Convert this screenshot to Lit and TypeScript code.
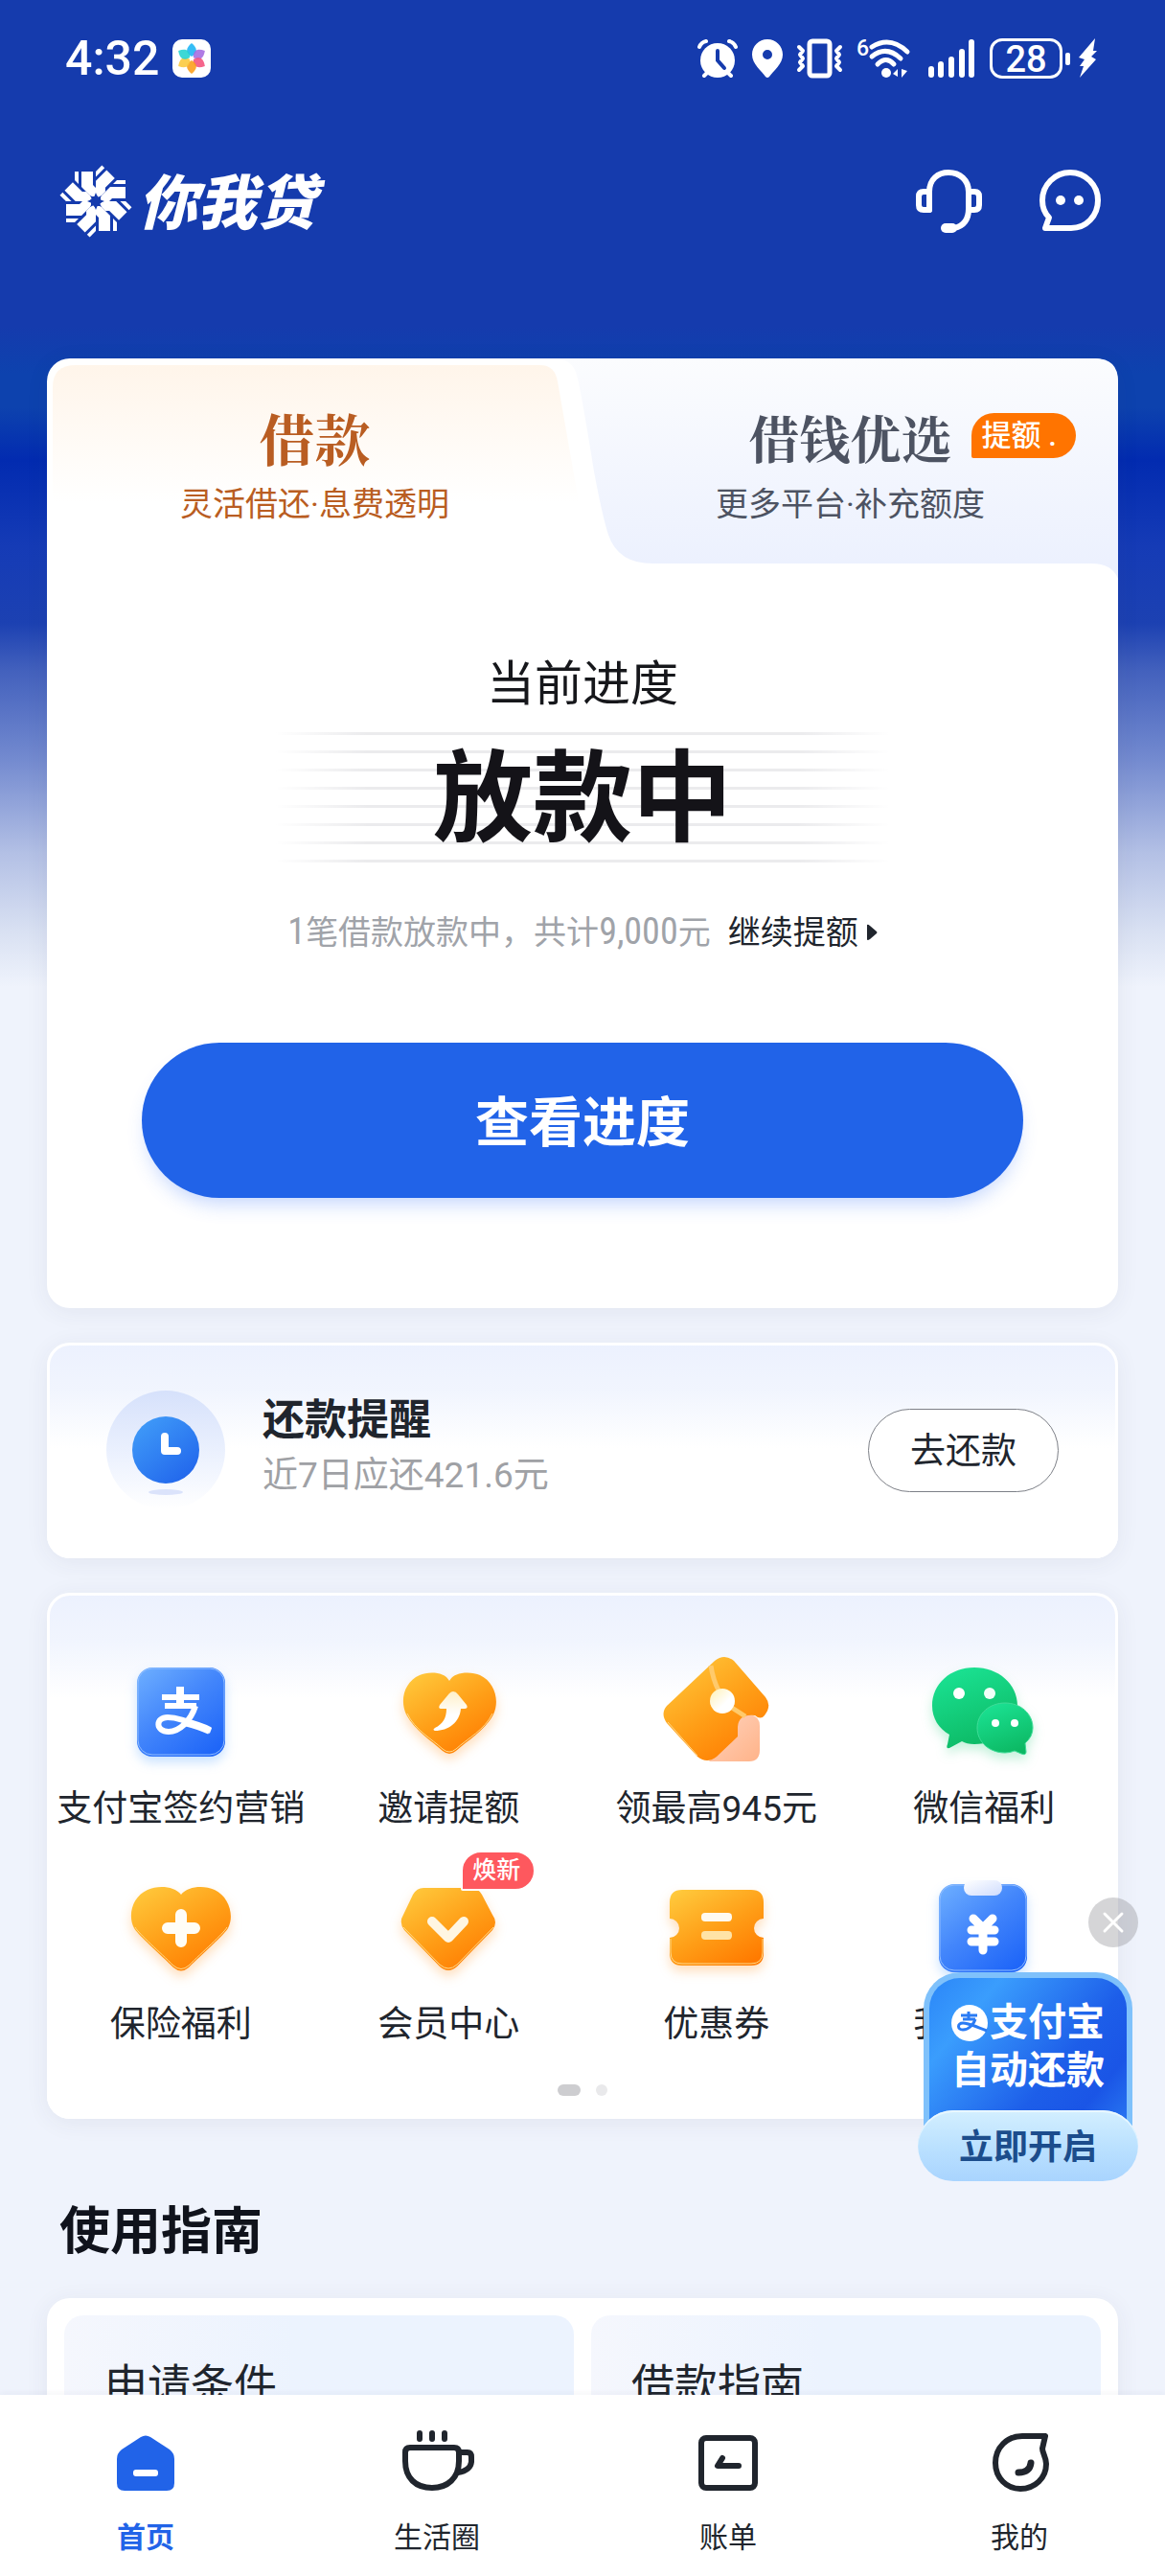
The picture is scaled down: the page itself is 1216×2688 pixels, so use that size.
import { LitElement, html, svg, css, nothing } from "lit";
import { customElement, state } from "lit/decorators.js";
import { classMap } from "lit/directives/class-map.js";

type Shape = ReturnType<typeof svg>;

interface Service {
  label: string;
  icon: Shape;
  badge?: string;
}

interface NavItem {
  label: string;
  icon: Shape;
}

const gradients = svg`
  <defs>
    <linearGradient id="orange" x1="0.1" y1="0" x2="0.8" y2="1">
      <stop offset="0" stop-color="#ffc93c" />
      <stop offset="0.55" stop-color="#ff9d16" />
      <stop offset="1" stop-color="#ff7a00" />
    </linearGradient>
    <linearGradient id="blue" x1="0" y1="0" x2="0.8" y2="1">
      <stop offset="0" stop-color="#6fb0ff" />
      <stop offset="0.5" stop-color="#4386fb" />
      <stop offset="1" stop-color="#1f66f8" />
    </linearGradient>
    <linearGradient id="green" x1="0.2" y1="0" x2="0.6" y2="1">
      <stop offset="0" stop-color="#1be394" />
      <stop offset="1" stop-color="#0cb863" />
    </linearGradient>
    <linearGradient id="cream" x1="0.5" y1="0" x2="0.5" y2="1">
      <stop offset="0" stop-color="#fff0c8" />
      <stop offset="0.6" stop-color="#ffffff" />
    </linearGradient>
    <linearGradient id="pearl" x1="0" y1="0" x2="1" y2="1">
      <stop offset="0" stop-color="#fff0b4" />
      <stop offset="0.6" stop-color="#ffffff" />
    </linearGradient>
    <linearGradient id="peach" x1="0" y1="0" x2="1" y2="1">
      <stop offset="0" stop-color="#ffd3bd" />
      <stop offset="1" stop-color="#ffb389" />
    </linearGradient>
    <linearGradient id="clip" x1="0" y1="0" x2="1" y2="1">
      <stop offset="0" stop-color="#ffffff" />
      <stop offset="1" stop-color="#cfdcfd" />
    </linearGradient>
  </defs>
`;

const services: Service[] = [
  {
    label: "支付宝签约营销",
    icon: svg`<g class="glow-blue">
        <rect x="14" y="14" width="92" height="93" rx="16" fill="url(#blue)" />
        <rect x="15" y="15" width="90" height="90" rx="15" fill="none" stroke="#8fbcff" stroke-width="1" />
      </g>
      <g fill="none" stroke="#fff" stroke-width="6">
        <path d="M59 34V53" stroke-width="8" />
        <path d="M40 45H79M43 54H76" />
        <path d="M75 54C70 70 58 81 47 81C33 81 33 66 46 66C58 66 70 72 91 80" />
        <path d="M64 71C72 73 82 76 90 80" stroke-width="8" />
      </g>`,
  },
  {
    label: "邀请提额",
    icon: svg`<g class="glow-orange">
        <path d="M61 28C66 18 84 18 93 22C108 29 114 48 107 63C98 80 80 90 68 101Q61 107 54 101C42 90 25 80 16 63C9 48 14 29 30 22C39 18 56 18 61 28Z" fill="url(#orange)" />
        <path d="M106 62C98 79 80 88 68 99Q61 105 54 99C42 88 25 79 17 62" fill="none" stroke="#ffd98a" stroke-width="1" />
      </g>
      <path d="M65 39Q68 39 70 42L79 53Q81 57 77 57H73C72 71 60 80 46 80Q43 79 46 77C54 73 58 67 58 57H52Q49 57 51 53L61 41Q63 39 65 39Z" fill="url(#cream)" />`,
  },
  {
    label: "领最高945元",
    icon: svg`<path d="M82 76V73Q83 63 95 63Q105 65 105 75V100Q105 112 94 112H52Z" fill="url(#peach)" />
      <path d="M58 7Q68 -1 78 7L111 45Q118 54 110 64Q106 69 100 64Q83 62 82 76V86L60 107Q50 115 40 107L8 72Q1 62 8 54Z" fill="url(#orange)" />
      <path d="M40 106L9 71" stroke="#ffd98a" stroke-width="1" />
      <path d="M54 12Q56 26 62 38M76 56L90 65" fill="none" stroke="#ffca6b" stroke-width="5" />
      <circle cx="66" cy="49" r="13" fill="url(#pearl)" />`,
  },
  {
    label: "微信福利",
    icon: svg`<g class="glow-green">
        <path d="M50 14C75 14 95 31 95 54C95 78 75 94 50 94Q42 94 37 91L24 98Q20 99 22 94L24 84C13 78 6 67 6 54C6 31 25 14 50 14Z" fill="url(#green)" />
        <path d="M82 51C98 51 111 62 111 77Q111 86 103 93L104 102Q104 106 99 104L92 101Q87 103 82 103C66 103 53 92 53 77C53 62 66 51 82 51Z" fill="url(#green)" stroke="#3fdc98" stroke-width="1" />
      </g>
      <circle cx="34" cy="41" r="6" fill="#fff" /><circle cx="66" cy="41" r="6" fill="#f1fff8" />
      <circle cx="72" cy="72" r="4" fill="#fff" /><circle cx="92" cy="72" r="4" fill="#fff" />`,
  },
  {
    label: "保险福利",
    icon: svg`<g class="glow-orange">
        <path d="M60 26C67 17 84 16 95 21C110 28 116 48 109 61C105 68 82 88 68 102Q60 109 52 102C38 88 15 68 11 61C4 48 9 28 25 21C36 16 53 17 60 26Z" fill="url(#orange)" />
        <path d="M108 60C104 67 82 86 68 100Q60 107 52 100C38 86 16 67 12 60" fill="none" stroke="#ffd98a" stroke-width="1" />
      </g>
      <path d="M60 47V75M46 61H74" stroke="#fffdf6" stroke-width="12" stroke-linecap="round" />`,
  },
  {
    label: "会员中心",
    badge: "焕新",
    icon: svg`<g class="glow-orange">
        <path d="M34 19H84Q91 19 95 26L106 47Q112 55 106 63L69 101Q60 109 51 101L14 63Q8 55 13 47L23 26Q27 19 34 19Z" fill="url(#orange)" />
        <path d="M107 60L69 99Q60 107 51 99L13 60" fill="none" stroke="#ffd98a" stroke-width="1" />
      </g>
      <path d="M43 54L60 71L76 54" fill="none" stroke="#fff6e2" stroke-width="10" stroke-linecap="round" stroke-linejoin="round" />`,
  },
  {
    label: "优惠券",
    icon: svg`<g class="glow-orange">
        <path d="M24 21H96Q109 21 109 34V51A10 10 0 0 0 109 71V87Q109 100 96 100H24Q11 100 11 87V71A10 10 0 0 0 11 51V34Q11 21 24 21Z" fill="url(#orange)" />
        <path d="M108 72V86Q108 98 96 98H24Q12 98 12 86V72" fill="none" stroke="#ffd98a" stroke-width="1" />
      </g>
      <rect x="44" y="45" width="32" height="9" rx="4" fill="#fffaf0" />
      <rect x="44" y="64" width="32" height="9" rx="4" fill="#ffe3a6" />`,
  },
  {
    label: "我的借款",
    icon: svg`<g class="glow-blue">
        <rect x="13" y="15" width="92" height="92" rx="16" fill="url(#blue)" />
        <rect x="14" y="16" width="90" height="89" rx="15" fill="none" stroke="#8fbcff" stroke-width="1" />
      </g>
      <rect x="39" y="11" width="40" height="16" rx="8" fill="url(#clip)" />
      <path d="M49 51L59 61L69 51M47 63H71M47 75H71M59 62V84" fill="none" stroke="#fff" stroke-width="9" stroke-linecap="round" stroke-linejoin="round" />`,
  },
];

const navItems: NavItem[] = [
  {
    label: "首页",
    icon: svg`<path d="M35 13Q40 10 45 13L65 26Q70 30 70 36V61Q70 69 62 69H18Q10 69 10 61V36Q10 30 15 26Z" fill="#2163e8" />
      <rect x="27" y="47" width="26" height="7" rx="3" fill="#fff" />`,
  },
  {
    label: "生活圈",
    icon: svg`<g fill="none" stroke="#20252d" stroke-width="6" stroke-linecap="round" stroke-linejoin="round">
        <path d="M12 24H58Q63 24 63 29V38C63 56 51 66 35 66C18 66 7 56 7 38V29Q7 24 12 24Z" />
        <path d="M63 29H72Q76 29 76 34V39Q75 48 62 50" />
        <path d="M22 9V15M35 9V15M48 9V15" />
      </g>`,
  },
  {
    label: "账单",
    icon: svg`<g fill="none" stroke="#20252d" stroke-width="6" stroke-linecap="round" stroke-linejoin="round">
        <rect x="12" y="14" width="56" height="52" rx="5" />
        <path d="M34 35L29 43H51" />
      </g>`,
  },
  {
    label: "我的",
    icon: svg`<g fill="none" stroke="#20252d" stroke-width="6" stroke-linecap="round" stroke-linejoin="round">
        <path d="M67 12H43C27 12 15 24 15 40C15 56 27 67 41 67C56 67 68 56 68 41C68 34 64 30 64 25Z" />
        <path d="M52 40Q51 50 39 50" stroke-width="7" />
      </g>`,
  },
];

const emblemArms = [0, 45, 90, 135, 180, 225, 270, 315];
const petals = [
  { angle: 0, color: "#19b4f5" },
  { angle: 60, color: "#a46ae0" },
  { angle: 120, color: "#f4517c" },
  { angle: 180, color: "#fb9d18" },
  { angle: 240, color: "#fbc83b" },
  { angle: 300, color: "#22d3d0" },
];

@customElement("app-root")
export class AppRoot extends LitElement {
  @state() private tab = 0;
  @state() private page = 0;
  @state() private promoOpen = true;

  static styles = css`
    :host {
      display: block;
      font-family: Roboto, "Noto Sans CJK SC", "Liberation Sans", sans-serif;
      color: #20252d;
    }
    * {
      box-sizing: border-box;
    }
    button {
      margin: 0;
      padding: 0;
      border: 0;
      background: none;
      font: inherit;
      color: inherit;
      cursor: pointer;
    }
    a {
      color: inherit;
      text-decoration: none;
    }
    h1,
    h2,
    p {
      margin: 0;
    }
    svg {
      display: block;
      overflow: visible;
    }
    .app {
      position: relative;
      display: flex;
      flex-direction: column;
      height: 100vh;
      background: #eff3fc;
    }
    .scroll {
      flex: 1;
      min-height: 0;
      overflow-y: auto;
      scrollbar-width: none;
      background: linear-gradient(
          180deg,
          #153bad 0,
          #153bad 340px,
          #0d42ae 390px,
          #0d42ae 425px,
          #022bb0 480px,
          #153bb6 570px,
          #1c41b2 650px,
          #4361bd 700px,
          #7289cf 790px,
          #b3c0e5 890px,
          #d8e0f2 970px,
          #eff3fc 1030px
        )
        no-repeat;
    }

    .status {
      display: flex;
      align-items: center;
      justify-content: space-between;
      height: 122px;
      padding: 0 71px 0 68px;
      color: #fff;
    }
    .clock {
      display: flex;
      align-items: center;
      gap: 14px;
      font-size: 50px;
      line-height: 60px;
      font-weight: 500;
    }
    .indicators {
      display: flex;
      align-items: center;
      gap: 15px;
    }
    .wifi {
      margin-right: 3px;
    }
    .power {
      display: flex;
      align-items: center;
      gap: 3px;
    }
    .battery {
      width: 76px;
      height: 42px;
      border: 3px solid #fff;
      border-radius: 13px;
      font-size: 38px;
      font-weight: 500;
      line-height: 38px;
      text-align: center;
    }
    .nub {
      width: 5px;
      height: 13px;
      margin-right: 6px;
      border-radius: 2px;
      background: #fff;
    }

    .brand-bar {
      display: flex;
      align-items: center;
      justify-content: space-between;
      padding: 50px 67px 126px 62px;
      color: #fff;
    }
    .brand {
      display: flex;
      align-items: center;
      gap: 6px;
    }
    .brand-name {
      padding-bottom: 6px;
      font-size: 62px;
      line-height: 70px;
      font-weight: 900;
      font-style: italic;
      font-family: "Noto Sans CJK SC", sans-serif;
    }
    .actions {
      display: flex;
      gap: 58px;
    }

    .content {
      display: flex;
      flex-direction: column;
      gap: 36px;
      padding: 0 49px;
    }
    .card {
      border-radius: 24px;
      background: #fff;
      box-shadow: 0 4px 24px rgba(60, 60, 80, 0.07);
    }

    .tabs {
      position: relative;
      display: grid;
      grid-template-columns: 1fr 1fr;
      height: 230px;
    }
    .tab-shape {
      position: absolute;
      inset: 0;
      width: 100%;
      height: 100%;
    }
    .tab {
      position: relative;
      display: flex;
      flex-direction: column;
      align-items: center;
      gap: 16px;
      padding-top: 50px;
      color: #4d5362;
    }
    .tab.first {
      color: #b95d22;
    }
    .tab-title {
      position: relative;
      font-family: "Noto Serif CJK SC", "Noto Sans CJK SC", serif;
      font-size: 53px;
      line-height: 64px;
      font-weight: 700;
    }
    .first .tab-title {
      font-size: 58px;
    }
    .tab-sub {
      font-size: 34px;
      line-height: 44px;
    }
    .tab-badge {
      position: absolute;
      left: calc(100% + 20px);
      top: 7px;
      padding: 0 20px 0 11px;
      border-radius: 24px 24px 24px 2px;
      background: #ff7400;
      color: #fff;
      font-family: Roboto, "Noto Sans CJK SC", sans-serif;
      font-size: 31px;
      line-height: 47px;
      font-weight: 500;
      white-space: pre;
    }

    .progress {
      display: flex;
      flex-direction: column;
      align-items: center;
      padding: 80px 99px 115px;
    }
    .progress-label {
      font-size: 50px;
      line-height: 60px;
      color: #16171b;
    }
    .progress-state {
      display: flex;
      align-items: center;
      justify-content: center;
      width: 640px;
      max-width: 100%;
      height: 136px;
      margin: 20px 0 50px;
      padding-top: 6px;
      background: linear-gradient(
          90deg,
          #fff 0,
          rgba(255, 255, 255, 0) 15%,
          rgba(255, 255, 255, 0) 85%,
          #fff 100%
        ),
        repeating-linear-gradient(180deg, #ebebed 0, #ebebed 3px, #fff 3px, #fff 19px);
      font-size: 104px;
      line-height: 120px;
      font-weight: 700;
      color: #141318;
    }
    .progress-info {
      display: flex;
      align-items: center;
      gap: 18px;
      font-size: 34px;
      line-height: 44px;
      color: #a0a3a9;
    }
    .figure {
      font-family: "Liberation Sans Narrow", "Roboto Condensed", Roboto, sans-serif;
      font-size: 38px;
    }
    .more {
      display: flex;
      align-items: center;
      gap: 8px;
      color: #20252d;
    }
    .primary {
      align-self: stretch;
      height: 162px;
      margin-top: 93px;
      padding-bottom: 6px;
      border-radius: 81px;
      background: #2163e8;
      box-shadow: 0 12px 20px -6px rgba(60, 120, 250, 0.3);
      color: #fff;
      font-size: 56px;
      font-weight: 700;
    }

    .tinted {
      background: linear-gradient(180deg, #ecf1fe 0, #f1f5fe 50px, #fff 110px);
      box-shadow: inset 0 0 0 3px #fff, 0 4px 24px rgba(60, 60, 80, 0.07);
    }
    .reminder {
      display: flex;
      align-items: center;
      height: 225px;
      padding: 0 62px;
      gap: 38px;
    }
    .reminder-text {
      flex: 1;
      padding-bottom: 4px;
    }
    .reminder-title {
      font-size: 44px;
      line-height: 56px;
      font-weight: 700;
    }
    .reminder-sub {
      font-size: 37px;
      line-height: 60px;
      color: #9fa1a5;
    }
    .outline {
      width: 199px;
      height: 87px;
      padding-bottom: 6px;
      border: 1px solid #7d8087;
      border-radius: 44px;
      background: #fff;
      font-size: 37px;
    }

    .services {
      padding: 64px 0 24px;
    }
    .service-grid {
      display: grid;
      grid-template-columns: repeat(4, 1fr);
      row-gap: 39px;
    }
    .service {
      position: relative;
      display: flex;
      flex-direction: column;
      align-items: center;
      gap: 18px;
      font-size: 37px;
      line-height: 48px;
      white-space: nowrap;
    }
    .service-badge {
      position: absolute;
      left: calc(50% + 13px);
      top: -20px;
      padding: 0 14px 0 10px;
      border: 2px solid #fff;
      border-radius: 21px 21px 21px 2px;
      background: #fe585e;
      color: #fff;
      font-size: 25px;
      line-height: 38px;
      font-weight: 500;
    }
    .glow-orange {
      filter: drop-shadow(0 6px 6px rgba(255, 140, 20, 0.28));
    }
    .glow-blue {
      filter: drop-shadow(0 6px 6px rgba(60, 150, 255, 0.28));
    }
    .glow-green {
      filter: drop-shadow(0 6px 6px rgba(20, 200, 110, 0.25));
    }
    .dots {
      display: flex;
      justify-content: center;
      gap: 16px;
      margin-top: 38px;
    }
    .dot {
      width: 12px;
      height: 12px;
      border-radius: 6px;
      background: #e9e9eb;
    }
    .dot.active {
      width: 24px;
      background: #cdcdd0;
    }

    .section-title {
      margin: 49px 0 0 13px;
      font-size: 53px;
      line-height: 66px;
      font-weight: 700;
      color: #10131c;
    }
    .guides {
      display: grid;
      grid-template-columns: 1fr 1fr;
      gap: 18px;
      padding: 18px;
    }
    .guide {
      height: 200px;
      padding: 42px;
      border-radius: 20px;
      background: linear-gradient(90deg, #f5f7fd 0, #ecf3fe 45%, #ecf3fe 100%);
      font-size: 45px;
      line-height: 64px;
    }

    .nav {
      display: grid;
      grid-template-columns: repeat(4, 1fr);
      background: #fff;
      box-shadow: 0 -2px 6px rgba(40, 60, 120, 0.05);
    }
    .nav-item {
      display: flex;
      flex-direction: column;
      align-items: center;
      gap: 18px;
      padding: 31px 0 20px;
      font-size: 30px;
      line-height: 40px;
    }
    .nav-item.current {
      color: #2163e8;
      font-weight: 700;
    }

    .promo {
      position: absolute;
      right: 28px;
      bottom: 412px;
      display: flex;
      flex-direction: column;
      align-items: center;
      width: 230px;
    }
    .close {
      display: flex;
      align-items: center;
      justify-content: center;
      align-self: flex-end;
      width: 52px;
      height: 52px;
      margin-bottom: 26px;
      border-radius: 50%;
      background: rgba(150, 150, 155, 0.4);
    }
    .promo-body {
      width: 218px;
      padding: 22px 0 42px;
      border: 6px solid #7fc1fb;
      border-bottom: 0;
      border-radius: 38px 38px 0 0;
      background: linear-gradient(130deg, #2b86f8 0, #3a9dfd 22%, #1d5ee9 62%, #1a55e6 80%, #2a7bf3 100%);
      color: #fff;
      font-size: 40px;
      line-height: 50px;
      font-weight: 700;
    }
    .promo-line {
      display: flex;
      align-items: center;
      justify-content: center;
      gap: 2px;
    }
    .promo-cta {
      width: 100%;
      height: 74px;
      margin-top: -26px;
      padding-bottom: 4px;
      border-radius: 37px;
      background: linear-gradient(180deg, #d3efff 0, #b9e0ff 55%, #a9d4fe 100%);
      box-shadow: inset 0 2px 1px #eaf8ff;
      color: #1c4d8c;
      font-size: 36px;
      font-weight: 700;
    }
  `;

  private renderStatus() {
    return html`
      <div class="status">
        <div class="clock">
          <span>4:32</span>
          <svg width="40" height="40" viewBox="0 0 40 40" aria-hidden="true">
            <rect width="40" height="40" rx="10" fill="#fff" />
            ${petals.map(
              (p) => svg`<path d="M20 18C13 14 14 9 20 4C26 9 27 14 20 18Z" fill=${p.color} opacity="0.88"
                transform=${`rotate(${p.angle} 20 20)`} />`
            )}
            <circle cx="20" cy="20" r="2" fill="#fff" />
          </svg>
        </div>
        <div class="indicators">
          <svg width="42" height="42" viewBox="0 0 42 42" fill="none" stroke="#fff" aria-hidden="true">
            <circle cx="21" cy="23" r="18" fill="#fff" stroke="none" />
            <path d="M2 9Q4 4 9 3M33 3Q38 4 40 9M7 39L10 36M35 39L32 36" stroke-width="4" stroke-linecap="round" />
            <path d="M21 13V23L28 31" stroke="#153bad" stroke-width="4" stroke-linecap="round" />
          </svg>
          <svg width="32" height="42" viewBox="0 0 32 42" aria-hidden="true">
            <path fill="#fff" fill-rule="evenodd"
              d="M16 1C25 1 32 8 32 17C32 27 22 34 18 40Q16 42 14 40C10 34 0 27 0 17C0 8 7 1 16 1ZM16 12A5 5 0 1 0 16 22A5 5 0 1 0 16 12Z" />
          </svg>
          <svg width="47" height="42" viewBox="0 0 47 42" fill="none" stroke="#fff" stroke-linecap="round" stroke-linejoin="round" aria-hidden="true">
            <rect x="13" y="3" width="21" height="36" rx="3" stroke-width="5" />
            <path d="M2 9L6 13L3 17L6 21L3 25L6 29L2 33M45 9L41 13L44 17L41 21L44 25L41 29L45 33" stroke-width="4" />
          </svg>
          <svg class="wifi" width="56" height="42" viewBox="0 0 56 42" fill="none" stroke="#fff" stroke-linecap="round" aria-hidden="true">
            <text x="0" y="18" font-size="23" font-weight="500" fill="#fff" stroke="none">6</text>
            <path d="M16 9Q35 -3 53 14M16 19Q31 7 46 21M22 27Q31 18 39 27" stroke-width="5" />
            <circle cx="31" cy="36" r="5" fill="#fff" stroke="none" />
            <path d="M43 32V40L38 37ZM47 32L53 34L47 41Z" fill="#fff" stroke="none" />
          </svg>
          <svg width="50" height="42" viewBox="0 0 50 42" stroke="#fff" stroke-width="6" stroke-linecap="round" aria-hidden="true">
            <path d="M4 32V38M14 27V38M25 22V38M36 14V38M46 4V38" />
          </svg>
          <div class="power">
            <span class="battery">28</span>
            <span class="nub"></span>
            <svg width="19" height="42" viewBox="0 0 19 42" aria-hidden="true">
              <path d="M17 0L0 20L6 22L1 29H5L1 41L18 22L13 19L19 13H15Z" fill="#fff" />
            </svg>
          </div>
        </div>
      </div>
    `;
  }

  private renderBrand() {
    return html`
      <header class="brand-bar">
        <div class="brand">
          <svg width="76" height="76" viewBox="-38 -38 76 76" fill="#fff" aria-hidden="true">
            ${emblemArms.map(
              (a) => svg`<g transform=${`rotate(${a})`}>
                <path d="M-15 -31L-3 -31V-17L0 -14V-5H-5L-15 -15Z" />
                <path d="M-22 -31H-18V-18L-22 -22Z" />
              </g>`
            )}
            <path d="M0 -9L2 -4L6 -6L4 -2L9 0L4 2L6 6L2 4L0 9L-2 4L-6 6L-4 2L-9 0L-4 -2L-6 -6L-2 -4Z" fill="#153bad" />
          </svg>
          <span class="brand-name">你我贷</span>
        </div>
        <div class="actions">
          <button aria-label="客服">
            <svg width="70" height="68" viewBox="0 0 70 68" fill="none" stroke="#fff" stroke-width="6" stroke-linejoin="round" stroke-linecap="round" aria-hidden="true">
              <path d="M14 43V24C14 11 23 4 34 4C46 4 55 12 55 24V42C55 54 49 60 40 62" />
              <path d="M14 24H8Q3 24 3 29V38Q3 43 8 43H14ZM55 24H61Q66 24 66 29V38Q66 43 61 43H55Z" />
              <path d="M31 62H38" stroke-width="10" />
            </svg>
          </button>
          <button aria-label="消息">
            <svg width="65" height="68" viewBox="0 0 65 68" fill="none" stroke="#fff" stroke-width="6" stroke-linejoin="round" aria-hidden="true">
              <path d="M34 62H7L11 51C6 46 4 40 4 33C4 17 17 4 33 4C49 4 62 17 62 33C62 49 50 62 34 62Z" />
              <g fill="#fff" stroke="none"><circle cx="23" cy="33" r="5" /><circle cx="42" cy="33" r="5" /></g>
            </svg>
          </button>
        </div>
      </header>
    `;
  }

  private renderLoan() {
    return html`
      <section class="card">
        <div class="tabs" role="tablist">
          <svg class="tab-shape" viewBox="0 0 1118 230" preserveAspectRatio="none" aria-hidden="true">
            <defs>
              <linearGradient id="warm" x1="0" y1="0" x2="0" y2="1">
                <stop offset="0" stop-color="#fff5ea" />
                <stop offset="1" stop-color="#ffffff" />
              </linearGradient>
              <linearGradient id="cool" x1="0" y1="0" x2="0" y2="1">
                <stop offset="0" stop-color="#fbfcfe" />
                <stop offset="1" stop-color="#ebf0fe" />
              </linearGradient>
            </defs>
            <path d="M6 30Q6 7 30 7H515Q530 7 533 24L555 150H6Z" fill="url(#warm)" />
            <path d="M530 0H1094Q1118 0 1118 24V230Q1112 214 1090 214H632Q596 214 586 184Q580 166 571 118Q556 24 552 14Q546 0 530 0Z" fill="url(#cool)" />
          </svg>
          <button class="tab first" role="tab" aria-selected=${this.tab === 0} @click=${() => (this.tab = 0)}>
            <span class="tab-title">借款</span>
            <span class="tab-sub">灵活借还·息费透明</span>
          </button>
          <button class="tab" role="tab" aria-selected=${this.tab === 1} @click=${() => (this.tab = 1)}>
            <span class="tab-title">借钱优选<span class="tab-badge">提额 .</span></span>
            <span class="tab-sub">更多平台·补充额度</span>
          </button>
        </div>
        <div class="progress">
          <p class="progress-label">当前进度</p>
          <h1 class="progress-state">放款中</h1>
          <div class="progress-info">
            <span><span class="figure">1</span>笔借款放款中，共计<span class="figure">9,000</span>元</span>
            <a class="more" href="#raise">
              继续提额
              <svg width="12" height="18" viewBox="0 0 12 18" aria-hidden="true">
                <path d="M1 1Q2 0 4 2L11 8Q12 9 11 10L4 16Q1 18 1 16Z" fill="#20252d" />
              </svg>
            </a>
          </div>
          <button class="primary">查看进度</button>
        </div>
      </section>
    `;
  }

  private renderReminder() {
    return html`
      <section class="card tinted reminder">
        <svg width="125" height="125" viewBox="0 0 125 125" aria-hidden="true">
          <defs>
            <linearGradient id="halo" x1="0.5" y1="0" x2="0.5" y2="1">
              <stop offset="0" stop-color="#d6e1fb" />
              <stop offset="0.6" stop-color="#eef3fe" />
              <stop offset="1" stop-color="#ffffff" />
            </linearGradient>
            <linearGradient id="dial" x1="0.1" y1="0.1" x2="0.8" y2="0.95">
              <stop offset="0" stop-color="#3f9af8" />
              <stop offset="1" stop-color="#2267ec" />
            </linearGradient>
          </defs>
          <circle cx="62" cy="62" r="62" fill="url(#halo)" />
          <ellipse cx="62" cy="106" rx="18" ry="3" fill="#dbe3fb" />
          <circle cx="62" cy="62" r="35" fill="url(#dial)" />
          <path d="M61 48V63H74" fill="none" stroke="#fff" stroke-width="8" stroke-linecap="round" stroke-linejoin="round" />
        </svg>
        <div class="reminder-text">
          <h2 class="reminder-title">还款提醒</h2>
          <p class="reminder-sub">近7日应还421.6元</p>
        </div>
        <button class="outline">去还款</button>
      </section>
    `;
  }

  private renderServices() {
    return html`
      <section class="card tinted services">
        <div class="service-grid">
          ${services.map(
            (s) => html`
              <a class="service" href="#service">
                <svg width="120" height="120" viewBox="0 0 120 120" aria-hidden="true">${gradients}${s.icon}</svg>
                <span>${s.label}</span>
                ${s.badge ? html`<span class="service-badge">${s.badge}</span>` : nothing}
              </a>
            `
          )}
        </div>
        <div class="dots">
          ${[0, 1].map(
            (i) => html`<button
              class=${classMap({ dot: true, active: this.page === i })}
              aria-label=${`第${i + 1}页`}
              @click=${() => (this.page = i)}
            ></button>`
          )}
        </div>
      </section>
    `;
  }

  private renderPromo() {
    if (!this.promoOpen) return nothing;
    return html`
      <aside class="promo">
        <button class="close" aria-label="关闭" @click=${() => (this.promoOpen = false)}>
          <svg width="22" height="22" viewBox="0 0 22 22" stroke="#fff" stroke-width="3" stroke-linecap="round" aria-hidden="true">
            <path d="M2 2L20 20M20 2L2 20" />
          </svg>
        </button>
        <div class="promo-body">
          <div class="promo-line">
            <svg width="38" height="38" viewBox="0 0 38 38" aria-hidden="true">
              <circle cx="19" cy="19" r="19" fill="#fff" />
              <g fill="none" stroke="#2a7bf4" stroke-width="3">
                <path d="M18 7V14M10 11H27M12 15H25" />
                <path d="M25 15C23 21 18 26 12 26C6 26 6 19 12 19C18 19 26 23 37 27" />
              </g>
            </svg>
            <span>支付宝</span>
          </div>
          <div class="promo-line">自动还款</div>
        </div>
        <button class="promo-cta">立即开启</button>
      </aside>
    `;
  }

  render() {
    return html`
      <div class="app">
        <main class="scroll">
          ${this.renderStatus()} ${this.renderBrand()}
          <div class="content">
            ${this.renderLoan()} ${this.renderReminder()} ${this.renderServices()}
            <h2 class="section-title">使用指南</h2>
            <section class="card guides">
              <a class="guide" href="#terms">申请条件</a>
              <a class="guide" href="#guide">借款指南</a>
            </section>
          </div>
        </main>
        <nav class="nav">
          ${navItems.map(
            (n, i) => html`
              <a class=${classMap({ "nav-item": true, current: i === 0 })} href="#nav">
                <svg width="80" height="80" viewBox="0 0 80 80" aria-hidden="true">${n.icon}</svg>
                <span>${n.label}</span>
              </a>
            `
          )}
        </nav>
        ${this.renderPromo()}
      </div>
    `;
  }
}
